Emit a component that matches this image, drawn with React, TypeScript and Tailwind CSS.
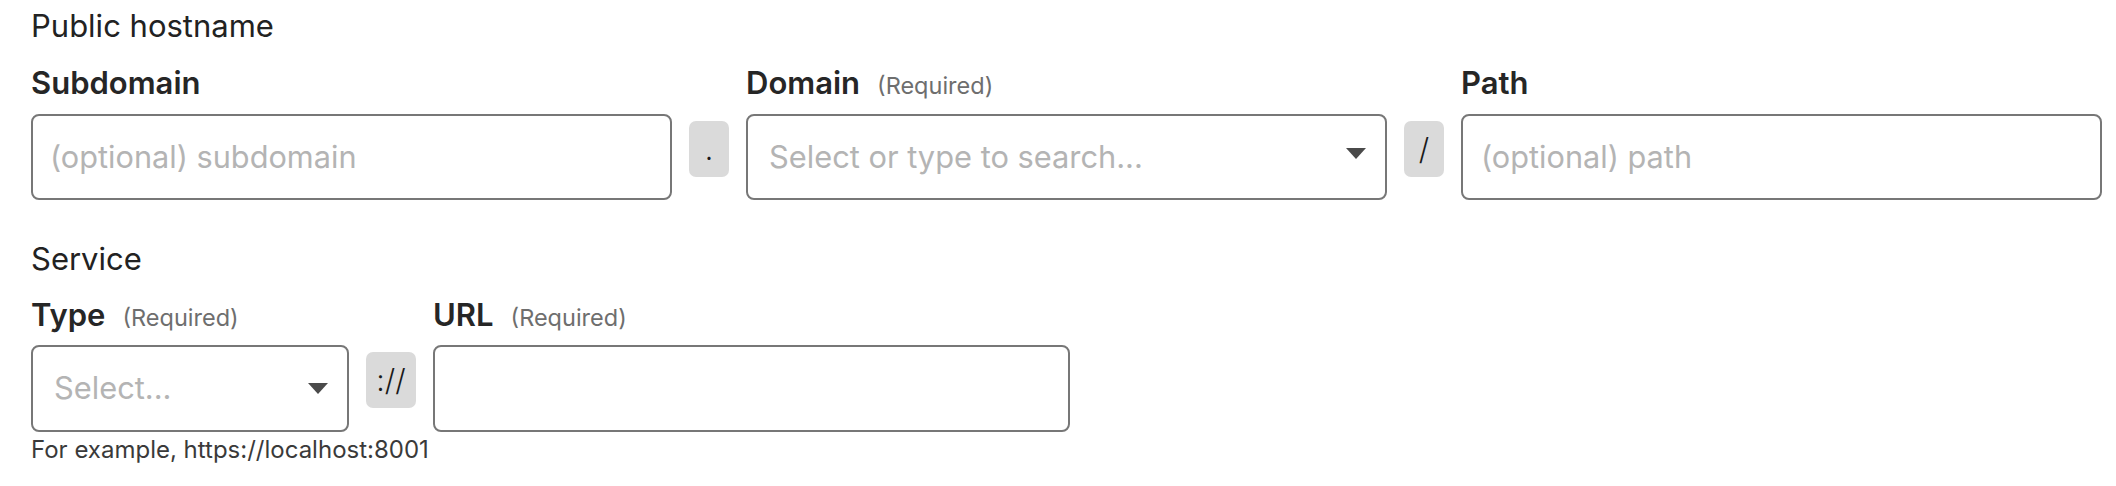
const font = { fontFamily: 'Inter, "Noto Sans", sans-serif' }

function Caret() {
    return (
        <svg width="20" height="11" viewBox="0 0 20 11" className="shrink-0">
            <path d="M0 0 H20 L10 11 Z" fill="#4a4a4a" />
        </svg>
    )
}

function Label({ text, required }: { text: string; required?: boolean }) {
    return (
        <div className="flex items-baseline gap-[17px] h-[36px] leading-[36px]">
            <span className="text-[31px] font-semibold text-[#262626]">{text}</span>
            {required && <span className="text-[23.5px] text-[#6e6e6e]">(Required)</span>}
        </div>
    )
}

function Joiner({ glyph, wide }: { glyph: string; wide?: boolean }) {
    return (
        <div
            className={
                'mt-[7px] h-[56px] rounded-[7px] bg-[#dadada] flex items-center justify-center text-[30px] font-light text-[#1a1a1a] ' +
                (wide ? 'w-[50px]' : 'w-[40px]')
            }
        >
            {glyph}
        </div>
    )
}

export default function App() {
    return (
        <div style={font} className="w-[2116px] h-[486px] bg-white pl-[31px] pt-[8px] overflow-hidden">
            <div className="text-[31px] leading-[36px] text-[#222]">Public hostname</div>

            <div className="mt-[21px] flex items-start gap-[17px]">
                <div className="w-[641px]">
                    <Label text="Subdomain" />
                    <div className="mt-[13px] h-[86px] rounded-[8px] border-2 border-[#777] flex items-center px-[17px] text-[30.7px] text-[#b4b4b4]">
                        (optional) subdomain
                    </div>
                </div>
                <div className="pt-[49px]">
                    <Joiner glyph="." />
                </div>
                <div className="w-[641px]">
                    <Label text="Domain" required />
                    <div className="mt-[13px] h-[86px] rounded-[8px] border-2 border-[#777] flex items-center justify-between pl-[21px] pr-[19px] text-[30.8px] text-[#b4b4b4]">
                        <span>Select or type to search...</span>
                        <div className="-mt-[7px]"><Caret /></div>
                    </div>
                </div>
                <div className="pt-[49px]">
                    <Joiner glyph="/" />
                </div>
                <div className="w-[641px]">
                    <Label text="Path" />
                    <div className="mt-[13px] h-[86px] rounded-[8px] border-2 border-[#777] flex items-center px-[18px] text-[30.7px] text-[#b4b4b4]">
                        (optional) path
                    </div>
                </div>
            </div>

            <div className="mt-[41px] text-[31px] leading-[36px] text-[#222]">Service</div>

            <div className="mt-[20px] flex items-start gap-[17px]">
                <div className="w-[318px]">
                    <Label text="Type" required />
                    <div className="mt-[12px] h-[87px] rounded-[8px] border-2 border-[#777] flex items-center justify-between pl-[21px] pr-[19px] text-[30.8px] text-[#b4b4b4]">
                        <span>Select...</span>
                        <Caret />
                    </div>
                </div>
                <div className="pt-[48px]">
                    <Joiner glyph="://" wide />
                </div>
                <div className="w-[637px]">
                    <Label text="URL" required />
                    <div className="mt-[12px] h-[87px] rounded-[8px] border-2 border-[#777]" />
                </div>
            </div>

            <div className="mt-[4px] text-[24px] leading-[28px] text-[#3a3a3a]">For example, https://localhost:8001</div>
        </div>
    )
}
